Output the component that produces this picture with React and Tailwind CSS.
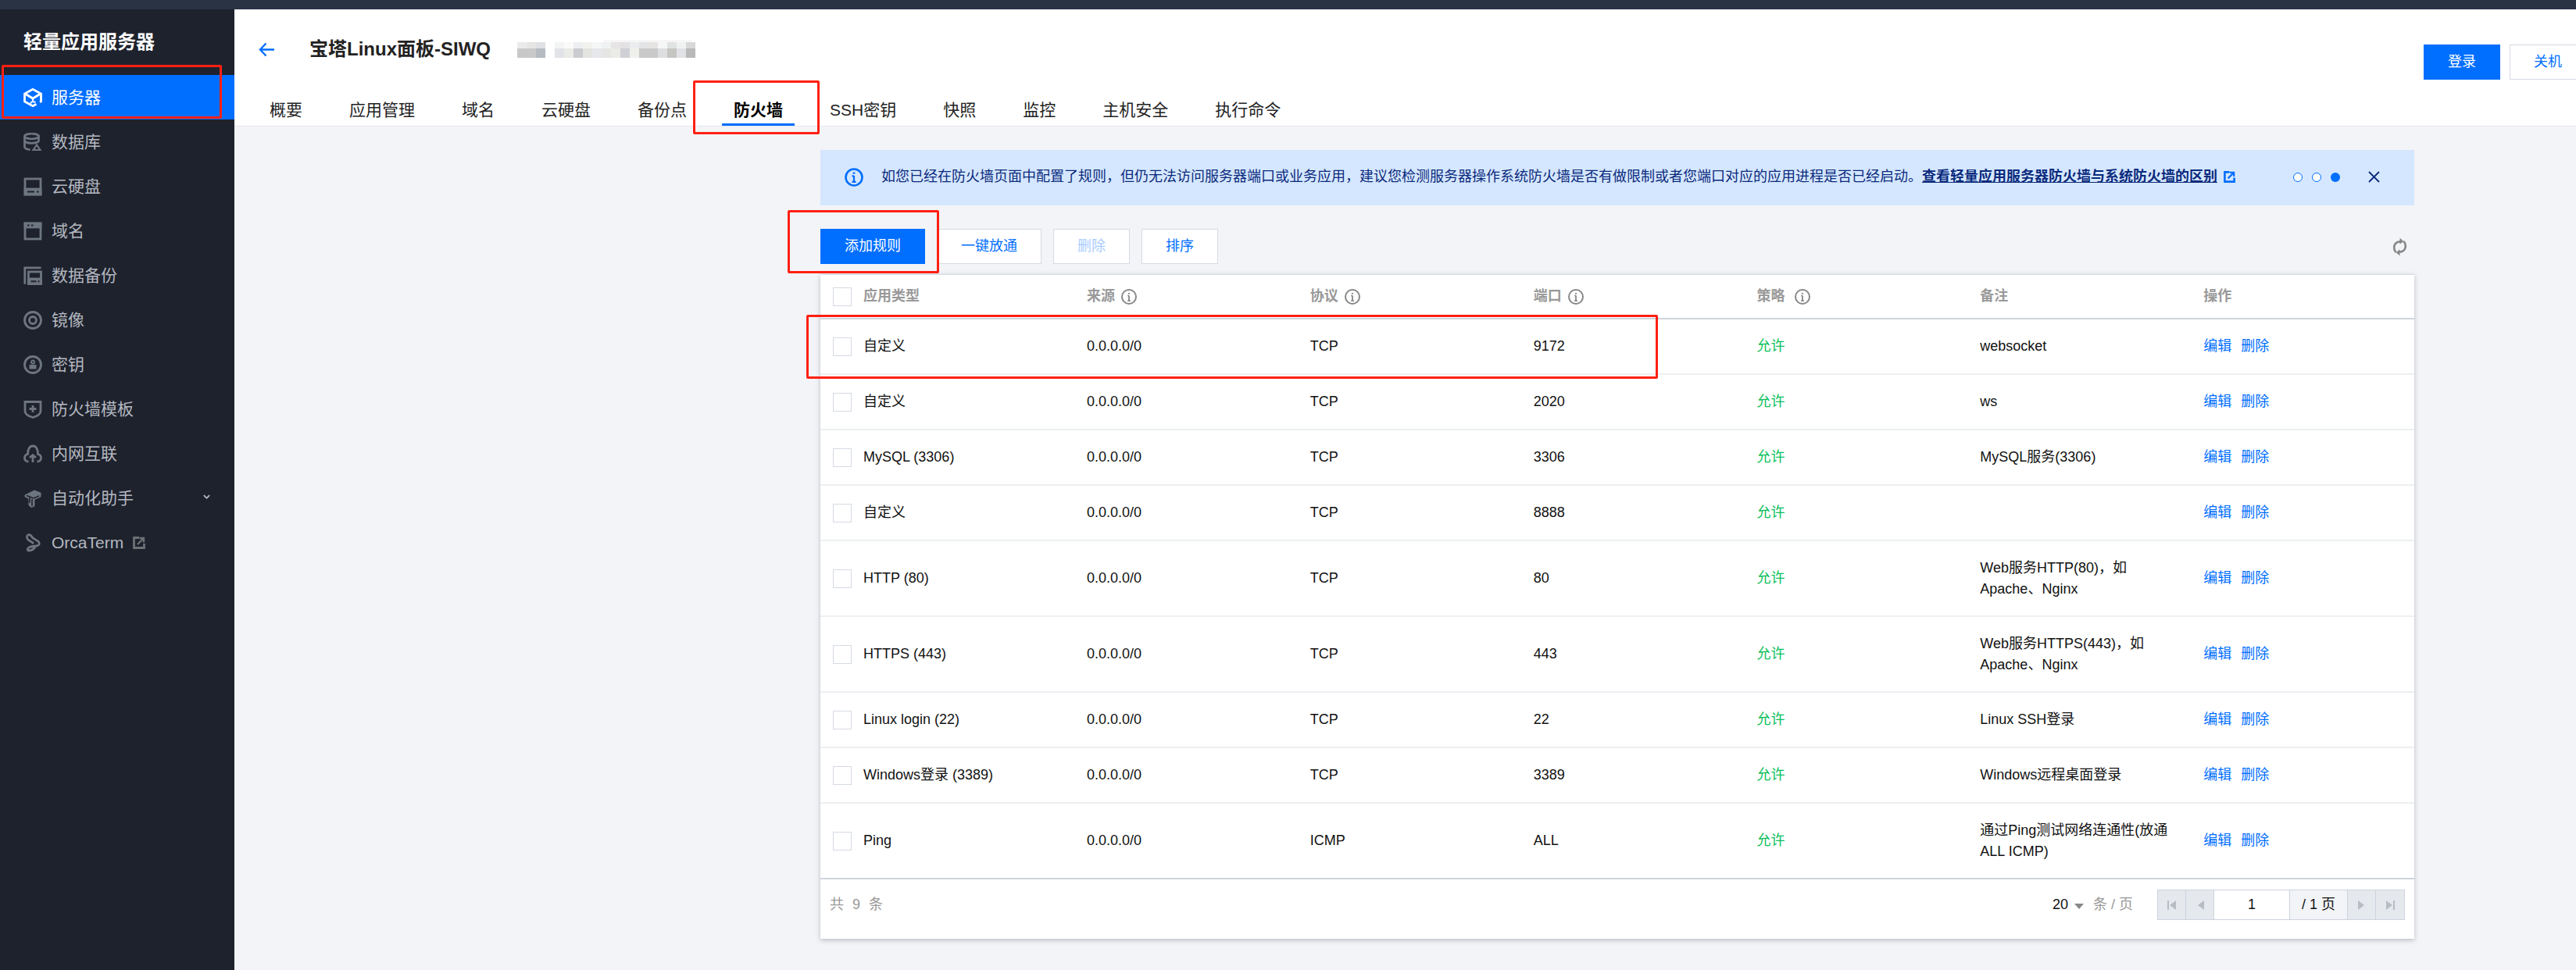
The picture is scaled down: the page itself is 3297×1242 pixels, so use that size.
import React from 'react';

const font = "font-['Liberation_Sans','Noto_Sans_CJK_SC',sans-serif]";
const dark = '#1e222d';

const icons = {
  server: (
    <>
      <path d="M16.500 20.300L12 22.800 1.500 17V7L12 1.300 22.500 7v10l-1.500.8" />
      <path d="M2 7l10 6 10-6" />
      <path d="M12 13v3" strokeWidth="2.200" />
      <path d="M9 19.500c1-2.500 4-3 6.500-1.500" strokeWidth="2" />
    </>
  ),
  db: (
    <>
      <ellipse cx="10.500" cy="4.500" rx="9" ry="3.300" />
      <path d="M1.500 4.500v5.500c0 2 4 3.300 9 3.300s9-1.300 9-3.300V4.500" />
      <path d="M1.500 10v8c0 2 3 3.500 7 3.500" />
      <path d="M17 13.500l6.500 9.500h-13z" fill="currentColor" stroke="none" />
      <path d="M17 17.500l2.500 3.500h-5z" fill={dark} stroke="none" />
    </>
  ),
  disk: (
    <>
      <rect x="2" y="2" width="20" height="20" />
      <rect x="2" y="15" width="20" height="7" fill="currentColor" />
      <rect x="5" y="17.500" width="9" height="2" fill={dark} stroke="none" />
      <rect x="17" y="17.500" width="2.500" height="2" fill={dark} stroke="none" />
    </>
  ),
  domain: (
    <>
      <rect x="2" y="2" width="20" height="20" />
      <rect x="2" y="2" width="20" height="5" fill="currentColor" />
      <rect x="5" y="3.500" width="2.500" height="2" fill={dark} stroke="none" />
      <rect x="10" y="3.500" width="2.500" height="2" fill={dark} stroke="none" />
    </>
  ),
  backup: (
    <>
      <path d="M22.500 1.800H1.800v21" />
      <rect x="6.500" y="7" width="16" height="15.500" />
      <rect x="6.500" y="16" width="16" height="6.500" fill="currentColor" />
      <rect x="9.500" y="18.300" width="7" height="2" fill={dark} stroke="none" />
      <rect x="18.500" y="18.300" width="2" height="2" fill={dark} stroke="none" />
    </>
  ),
  image: (
    <>
      <circle cx="12" cy="12" r="10.500" />
      <circle cx="12" cy="12" r="4.500" />
    </>
  ),
  key: (
    <>
      <circle cx="12" cy="12" r="10.500" />
      <circle cx="12" cy="8.500" r="2" strokeWidth="1.800" />
      <rect x="7.500" y="12" width="9" height="5.500" fill="currentColor" stroke="none" />
    </>
  ),
  shield: (
    <>
      <path d="M2 2.500h20v12c0 4-5 6.500-10 8-5-1.500-10-4-10-8z" />
      <path d="M12 7v9M7.500 11.500h9" />
    </>
  ),
  network: (
    <>
      <path d="M6.500 22C3.500 22 1.500 20 1.500 17.500c0-2.500 1.500-4.500 4-5C5.500 6 8 2 12 2s6.500 4 6.500 10.500c2.500.5 4 2.500 4 5 0 2.500-2 4.500-5 4.500" />
      <path d="M12 23v-9.500M8 17l4-3.500 4 3.500" />
    </>
  ),
  auto: (
    <>
      <path d="M2 8l12-6 8 3v5l-8 3.500V22l-4 1.500-3-2.500v-8.500L2 10z" fill="currentColor" strokeWidth="1" />
      <path d="M4 8.500l9 3.500 7-3M11 13v9M8 11v7" stroke={dark} strokeWidth="1.500" />
    </>
  ),
  orca: (
    <>
      <path d="M5 2.500c2-1.500 4.500-.5 5.500 1.500 1.200 2.500 4.500 3.500 7.500 5.500 3 2 3 5 .5 6-2.500 1-7 .5-10.500 2-3.500 1.500-3.500 4.500-1 4.500 3 0 6.500-2 8.500-5.500" />
      <path d="M5 2.500C3.500 4.500 5 8 8 9.500c2 1 4 2.500 5 3.500" />
    </>
  ),
};

function Icon({ name, className }) {
  return (
    <svg viewBox="0 0 24 24" fill="none" stroke="currentColor" strokeWidth="2.800" className={className}>
      {icons[name]}
    </svg>
  );
}

function ExternalIcon({ className }) {
  return (
    <svg viewBox="0 0 16 16" className={className} fill="none" stroke="currentColor" strokeWidth="2.800">
      <path d="M8 1.500H1.500v13h13V9" />
      <path d="M6 10l7-7M8.500 2H14v5.500" strokeWidth="2.400" />
    </svg>
  );
}

function InfoIcon() {
  return (
    <svg viewBox="0 0 20 20" className="w-5 h-5 text-[#888]" fill="none" stroke="currentColor" strokeWidth="2">
      <circle cx="10" cy="10" r="9" />
      <path d="M10 8.500V15M8.300 8.700H10M8.300 15h3.400" strokeWidth="1.800" />
      <path d="M10 5v1.600" strokeWidth="2.200" />
    </svg>
  );
}

const menu = [
  { icon: 'server', label: '服务器', active: true },
  { icon: 'db', label: '数据库' },
  { icon: 'disk', label: '云硬盘' },
  { icon: 'domain', label: '域名' },
  { icon: 'backup', label: '数据备份' },
  { icon: 'image', label: '镜像' },
  { icon: 'key', label: '密钥' },
  { icon: 'shield', label: '防火墙模板' },
  { icon: 'network', label: '内网互联' },
  { icon: 'auto', label: '自动化助手', arrow: true },
  { icon: 'orca', label: 'OrcaTerm', external: true },
];

const tabs = ['概要', '应用管理', '域名', '云硬盘', '备份点', '防火墙', 'SSH密钥', '快照', '监控', '主机安全', '执行命令'];

const rules = [
  { type: '自定义', proto: 'TCP', port: '9172', note: 'websocket' },
  { type: '自定义', proto: 'TCP', port: '2020', note: 'ws' },
  { type: 'MySQL (3306)', proto: 'TCP', port: '3306', note: 'MySQL服务(3306)' },
  { type: '自定义', proto: 'TCP', port: '8888', note: '' },
  { type: 'HTTP (80)', proto: 'TCP', port: '80', note: 'Web服务HTTP(80)，如Apache、Nginx' },
  { type: 'HTTPS (443)', proto: 'TCP', port: '443', note: 'Web服务HTTPS(443)，如Apache、Nginx' },
  { type: 'Linux login (22)', proto: 'TCP', port: '22', note: 'Linux SSH登录' },
  { type: 'Windows登录 (3389)', proto: 'TCP', port: '3389', note: 'Windows远程桌面登录' },
  { type: 'Ping', proto: 'ICMP', port: 'ALL', note: '通过Ping测试网络连通性(放通ALL ICMP)' },
];

// blurred instance id: blocks of [x, upper colour, lower colour]
const mosaic = [
  [3, '#ebebeb', '#c8c8c8'], [15, '#e6e6e4', '#c9c9c9'], [27, '#dfe1e4', '#b5bbc0'],
  [51, '#f3f4f4', '#e2e3e8'], [63, '#fafafa', '#ebebe8'], [75, '#eceef1', '#cbccd0'],
  [87, '#f1f1ee', '#e3e3e0'], [99, '#f5f6f6', '#e6e8ec'], [111, '#eff2f2', '#e5e5e3'],
  [123, '#e6e4e4', '#ebebe8'], [135, '#e3e1e3', '#cfd0d5'], [147, '#eaecef', '#efefec'],
  [159, '#e3e4e5', '#c9c9c9'], [171, '#e5e4e2', '#c9c9c9'], [183, '#f5f6f6', '#dcdee0'],
  [195, '#e0e3e3', '#c5c5c2'], [207, '#f0f1f1', '#e0e2e6'], [219, '#d8d8d8', '#b9b9b9'],
];

function Checkbox() {
  return <span className="block w-6 h-6 bg-white border border-[#d5dae3] shrink-0" />;
}

function Sidebar() {
  return (
    <aside className="w-[300px] shrink-0 bg-[#1e222d]">
      <div className="h-[84px] pl-[30px] flex items-center text-white text-[24px] font-bold">轻量应用服务器</div>
      <nav>
        {menu.map(item => (
          <div
            key={item.label}
            className={`h-[57px] pl-[30px] flex items-center text-[21px] ${item.active ? 'bg-[#006eff] text-white' : 'text-[#b4b8c0]'}`}
          >
            <Icon name={item.icon} className={`w-[24px] h-[24px] mr-[12px] ${item.active ? 'text-white' : 'text-[#6d7580]'}`} />
            <span>{item.label}</span>
            {item.external && <ExternalIcon className="w-4 h-4 ml-3 text-[#6d7075]" />}
            {item.arrow && (
              <svg viewBox="0 0 10 6" className="w-[9px] h-[6px] ml-[89px] -mt-1 text-[#b4b8c0]" fill="none" stroke="currentColor" strokeWidth="2">
                <path d="M1 1l4 4 4-4" />
              </svg>
            )}
          </div>
        ))}
      </nav>
    </aside>
  );
}

function Header() {
  return (
    <header className="h-[150px] bg-white border-b border-[#e4e6eb] flex flex-col">
      <div className="h-[102px] pl-[31px] flex items-center">
        <svg viewBox="0 0 22 20" className="w-[21px] h-[19px] text-[#006eff]" fill="none" stroke="currentColor" strokeWidth="2.400">
          <path d="M21 10H2M10 1.500L2 10l8 8.500" />
        </svg>
        <h1 className="ml-[44px] text-[24px] font-bold text-[#222]">宝塔Linux面板-SIWQ</h1>
        <svg viewBox="0 0 240 30" className="ml-[31px] w-[240px] h-[30px] blur-[0.6px]">
          <rect x="114" y="3" width="112" height="4" fill="#f6f6f6" />
          {mosaic.map(([x, top, bottom]) => (
            <g key={x}>
              <rect x={x} y="6" width="12" height="8" fill={top} />
              <rect x={x} y="14" width="12" height="12" fill={bottom} />
            </g>
          ))}
        </svg>
        <div className="ml-auto self-start mt-[45px] mr-[-13px] flex gap-3">
          <button className="w-[98px] h-[45px] bg-[#006eff] text-white text-[18px]">登录</button>
          <button className="w-[98px] h-[45px] bg-white border border-[#d5dae3] text-[#006eff] text-[18px]">关机</button>
        </div>
      </div>
      <div className="pl-[45px] flex gap-[60px]">
        {tabs.map(tab => (
          <div
            key={tab}
            className={`relative h-[47px] pt-[12px] text-[21px] leading-[29px] ${tab === '防火墙' ? 'font-bold text-black' : 'text-[#222]'}`}
          >
            {tab}
            {tab === '防火墙' && <span className="absolute left-[-15px] right-[-15px] bottom-0 h-[3px] bg-[#006eff]" />}
          </div>
        ))}
      </div>
    </header>
  );
}

function Banner() {
  return (
    <div className="h-[71px] bg-[#d5e7ff] flex items-center pl-[31px] pb-[2px] text-[18px] text-[#0a2a7c]">
      <svg viewBox="0 0 24 24" className="w-6 h-6 mr-[23px] text-[#006eff]" fill="none" stroke="currentColor" strokeWidth="2.600">
        <circle cx="12" cy="12" r="10.500" />
        <path d="M12 10v8M9.500 10.300H12M9.500 17.800h5" strokeWidth="2.200" />
        <path d="M12 5.500v2.200" />
      </svg>
      <span>如您已经在防火墙页面中配置了规则，但仍无法访问服务器端口或业务应用，建议您检测服务器操作系统防火墙是否有做限制或者您端口对应的应用进程是否已经启动。</span>
      <span className="font-bold underline">查看轻量应用服务器防火墙与系统防火墙的区别</span>
      <ExternalIcon className="w-[15px] h-[15px] ml-2 text-[#006eff]" />
      <div className="ml-[74px] flex gap-3">
        <span className="w-3 h-3 rounded-full bg-white border border-[#006eff]" />
        <span className="w-3 h-3 rounded-full bg-white border border-[#006eff]" />
        <span className="w-3 h-3 rounded-full bg-[#006eff]" />
      </div>
      <svg viewBox="0 0 15 15" className="w-[15px] h-[15px] ml-9" fill="none" stroke="currentColor" strokeWidth="1.800">
        <path d="M1 1l13 13M14 1L1 14" />
      </svg>
    </div>
  );
}

function Toolbar() {
  const plain = 'h-[45px] bg-white border border-[#d5dae3] text-[18px]';
  return (
    <div className="mt-[30px] h-[45px] flex items-center gap-[15px]">
      <button className="w-[134px] h-[45px] bg-[#006eff] text-white text-[18px]">添加规则</button>
      <button className={`${plain} w-[134px] text-[#006eff]`}>一键放通</button>
      <button className={`${plain} w-[98px] text-[#a9ccff]`}>删除</button>
      <button className={`${plain} w-[98px] text-[#006eff]`}>排序</button>
      <svg viewBox="0 0 20 24" className="ml-auto mr-[9px] w-[19px] h-6 text-[#888]" fill="none" stroke="currentColor" strokeWidth="2.800">
        <path d="M5 19.500C2.500 17 2 14 2.500 11 3.500 7.500 6.500 5 10.500 5" />
        <path d="M15 4.500c2.500 2.500 3 5.500 2.500 8.500-1 3.500-4 6-8 6" />
        <path d="M10 0l5 4.500-5 4z" fill="currentColor" stroke="none" />
        <path d="M10 24l-5-4.500 5-4z" fill="currentColor" stroke="none" />
      </svg>
    </div>
  );
}

function HeadCell({ label, info, wide }) {
  return (
    <div className="pl-4 flex items-center text-[18px] font-bold text-[#999]">
      <span>{label}</span>
      {info && <span className={wide ? 'ml-3' : 'ml-2'}><InfoIcon /></span>}
    </div>
  );
}

function PagerButton({ first, prev, next, last }) {
  const d = first || prev ? 'M11 0v12L3 6z' : 'M1 0v12l8-6z';
  return (
    <div className={`w-9 flex items-center justify-center text-[#b8bcc3] ${last ? '' : 'border-r border-[#cdd3de]'}`}>
      <svg viewBox="0 0 12 12" className="w-3 h-3" fill="currentColor">
        <path d={d} />
        {first && <rect x="0" y="0" width="2" height="12" />}
        {last && <rect x="10" y="0" width="2" height="12" />}
      </svg>
    </div>
  );
}

function RulesTable() {
  const columns = 'grid grid-cols-[325px_repeat(6,1fr)]';
  return (
    <div className="mt-[13px] bg-white border-t border-[#d5dae3] shadow-[0_2px_6px_rgba(54,58,80,0.3)] text-[18px] leading-[27px]">
      <div className={`${columns} h-[57px] border-b-2 border-[#cfd5de]`}>
        <div className="pl-4 flex items-center gap-[15px] text-[#999] font-bold">
          <Checkbox />
          <span>应用类型</span>
        </div>
        <HeadCell label="来源" info />
        <HeadCell label="协议" info />
        <HeadCell label="端口" info />
        <HeadCell label="策略" info wide />
        <HeadCell label="备注" />
        <HeadCell label="操作" />
      </div>
      {rules.map((rule, i) => (
        <div
          key={i}
          className={`${columns} min-h-[71px] py-[20.5px] items-center text-[#111] border-b-2 ${i < rules.length - 1 ? 'border-[#edeff2]' : 'border-[#cfd5de]'}`}
        >
          <div className="pl-4 flex items-center gap-[15px]">
            <Checkbox />
            <span>{rule.type}</span>
          </div>
          <div className="pl-4">0.0.0.0/0</div>
          <div className="pl-4">{rule.proto}</div>
          <div className="pl-4">{rule.port}</div>
          <div className="pl-4 text-[#0abf5b]">允许</div>
          <div className="pl-4 pr-1">{rule.note}</div>
          <div className="pl-4 flex gap-3 text-[#006eff]">
            <span>编辑</span>
            <span>删除</span>
          </div>
        </div>
      ))}
      <div className="h-[76px] pt-[13px] px-3 text-[#999]">
        <div className="h-[39px] flex items-center">
          <span className="tracking-[3px]">共 9 条</span>
          <span className="ml-auto text-[#111]">20</span>
          <span className="ml-2 mt-1 w-0 h-0 border-x-[6px] border-x-transparent border-t-[7px] border-t-[#888]" />
          <span className="ml-3">条 / 页</span>
          <div className="ml-[31px] h-[39px] flex border border-[#cdd3de] bg-[#e5e8ed]">
            <PagerButton first />
            <PagerButton prev />
            <div className="w-[97px] bg-white flex items-center justify-center text-[#111] border-r border-[#cdd3de]">1</div>
            <div className="w-[74px] bg-[#f2f4f8] flex items-center justify-center text-[#111] border-r border-[#cdd3de]">/ 1 页</div>
            <PagerButton next />
            <PagerButton last />
          </div>
        </div>
      </div>
    </div>
  );
}

function Mark({ className }) {
  return <div className={`absolute border-[3px] border-[#ff2012] rounded-[2px] ${className}`} />;
}

export default function App() {
  return (
    <div className={`relative w-[3297px] h-[1242px] overflow-hidden flex flex-col bg-[#f3f4f7] ${font}`}>
      <div className="h-3 shrink-0 bg-[#2a3344]" />
      <div className="flex-1 flex min-h-0">
        <Sidebar />
        <main className="flex-1 min-w-0">
          <Header />
          <section className="ml-[750px] w-[2040px] pt-[30px]">
            <Banner />
            <Toolbar />
            <RulesTable />
          </section>
        </main>
      </div>
      <Mark className="left-[2px] top-[83px] w-[282px] h-[69px]" />
      <Mark className="left-[887px] top-[103px] w-[162px] h-[69px]" />
      <Mark className="left-[1008px] top-[269px] w-[194px] h-[81px]" />
      <Mark className="left-[1032px] top-[403px] w-[1090px] h-[82px]" />
    </div>
  );
}
